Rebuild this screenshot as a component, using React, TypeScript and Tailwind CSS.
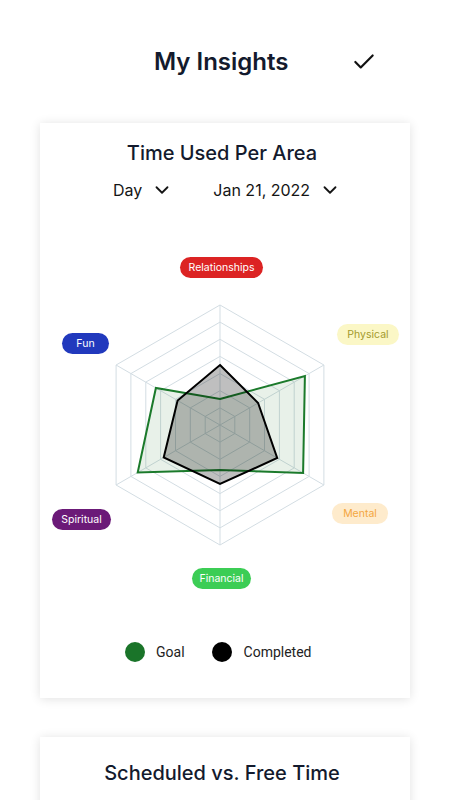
import { Check, ChevronDown } from "lucide-react";

const CX = 180;
const CY = 195;
const R = 120;

// order: Relationships, Physical, Mental, Financial, Spiritual, Fun
const goal = [26, 98, 96, 45, 95, 74];
const completed = [60, 44, 66, 59, 65, 49];

function pt(i: number, r: number) {
  const a = ((-90 + 60 * i) * Math.PI) / 180;
  return [CX + r * Math.cos(a), CY + r * Math.sin(a)];
}

function poly(radii: number[]) {
  return radii.map((r, i) => pt(i, r).map((v) => v.toFixed(1)).join(",")).join(" ");
}

const labels = [
  { text: "Relationships", cls: "left-[140px] top-[27px] w-[83px] bg-[#dc2323] text-white" },
  { text: "Physical", cls: "left-[297px] top-[94px] w-[62px] bg-[#fbf7c6] text-[#a39a2c]" },
  { text: "Fun", cls: "left-[22px] top-[103px] w-[47px] bg-[#2139bd] text-white" },
  { text: "Spiritual", cls: "left-[12px] top-[279px] w-[59px] bg-[#6b1a78] text-white" },
  { text: "Mental", cls: "left-[292px] top-[273px] w-[56px] bg-[#feebcc] text-[#f4a640]" },
  { text: "Financial", cls: "left-[152px] top-[338px] w-[59px] bg-[#3ccd55] text-white" },
];

function RadarChart() {
  const rings = [1, 2, 3, 4, 5, 6, 7].map((k) => (R * k) / 7);
  return (
    <div className="relative h-[380px] w-full">
      <svg width="370" height="380" className="absolute left-0 top-0">
        {rings.map((r) => (
          <polygon
            key={r}
            points={poly([r, r, r, r, r, r])}
            fill="none"
            stroke="#d3dde3"
            strokeWidth="1"
          />
        ))}
        {[0, 1, 2, 3, 4, 5].map((i) => {
          const [x, y] = pt(i, R);
          return (
            <line key={i} x1={CX} y1={CY} x2={x} y2={y} stroke="#d3dde3" strokeWidth="1" />
          );
        })}
        <polygon
          points={poly(goal)}
          fill="#1b7a2b"
          fillOpacity="0.1"
          stroke="#1b7a2b"
          strokeWidth="2"
        />
        <polygon
          points={poly(completed)}
          fill="#000"
          fillOpacity="0.25"
          stroke="#000"
          strokeWidth="2"
        />
      </svg>
      {labels.map((l) => (
        <div
          key={l.text}
          className={`absolute flex h-[21px] items-center justify-center rounded-full text-[10.5px] ${l.cls}`}
        >
          {l.text}
        </div>
      ))}
    </div>
  );
}

export default function App() {
  return (
    <div className="min-h-[800px] w-[450px] overflow-hidden bg-white font-['Inter',sans-serif] text-[#131a2d]">
      <div className="flex items-center pl-[154px] pt-[46px]">
        <h1 className="text-[24px] font-semibold leading-[32px]">My Insights</h1>
        <Check size={26} strokeWidth={2} className="ml-[63px] text-[#111]" />
      </div>

      <div className="mx-[40px] mt-[45px] bg-white pb-[36px] pt-[16px] shadow-[0_1px_10px_rgba(0,0,0,0.12)]">
        <h2 className="pr-[6px] text-center text-[20px] font-medium leading-[28px]">Time Used Per Area</h2>
        <div className="mt-[11px] flex items-center pl-[73px] text-[16px] leading-[24px] text-[#151515]">
          <span>Day</span>
          <ChevronDown size={22} strokeWidth={2} className="ml-[9px]" />
          <span className="ml-[40px]">Jan 21, 2022</span>
          <ChevronDown size={22} strokeWidth={2} className="ml-[9px]" />
        </div>
        <div className="mt-[28px]">
          <RadarChart />
        </div>
        <div className="mt-[32px] flex items-center pl-[85px] font-['Roboto',sans-serif] text-[14px] leading-[20px] text-[#222]">
          <span className="h-[20px] w-[20px] rounded-full bg-[#1a7429]" />
          <span className="ml-[11px]">Goal</span>
          <span className="ml-[27px] h-[20px] w-[20px] rounded-full bg-black" />
          <span className="ml-[12px]">Completed</span>
        </div>
      </div>

      <div className="mx-[40px] mt-[39px] h-[120px] bg-white pt-[22px] shadow-[0_1px_10px_rgba(0,0,0,0.12)]">
        <h2 className="pr-[6px] text-center text-[20px] font-medium leading-[28px]">Scheduled vs. Free Time</h2>
      </div>
    </div>
  );
}
